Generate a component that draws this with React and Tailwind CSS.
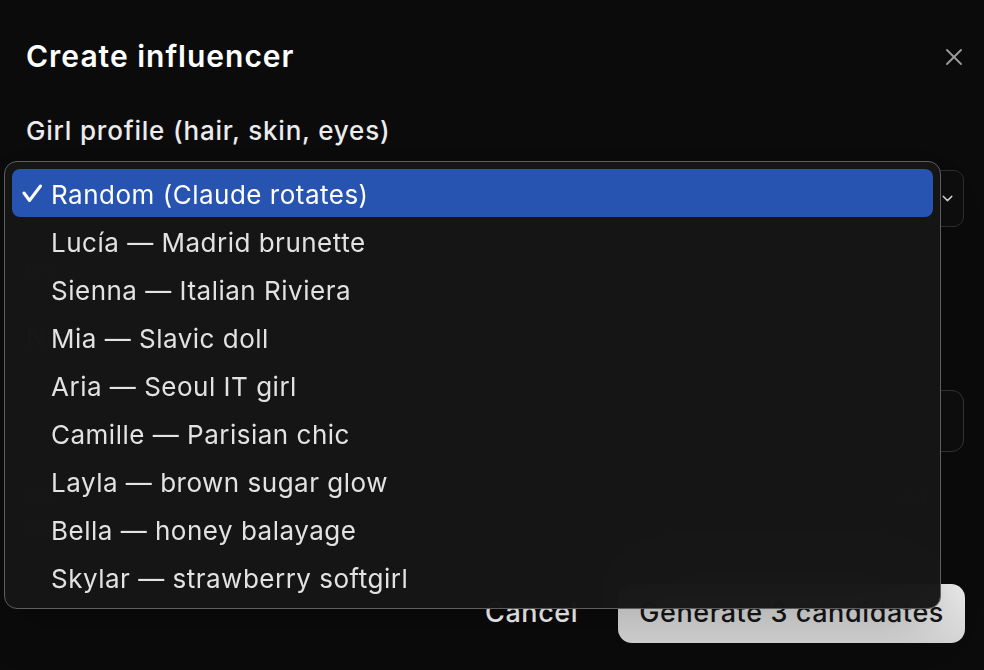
import React from "react";
import { X, ChevronDown } from "lucide-react";

const profiles = [
    "Random (Claude rotates)",
    "Lucía — Madrid brunette",
    "Sienna — Italian Riviera",
    "Mia — Slavic doll",
    "Aria — Seoul IT girl",
    "Camille — Parisian chic",
    "Layla — brown sugar glow",
    "Bella — honey balayage",
    "Skylar — strawberry softgirl",
];

const Check = () => (
    <svg width="20" height="19" viewBox="0 0 20 19" fill="none" className="shrink-0">
        <path d="M2 9 L7.5 16.5 L18.5 2" stroke="white" strokeWidth="3" strokeLinecap="round" strokeLinejoin="round"/>
    </svg>
);

// native-looking popup list that opens over the select
const ProfileMenu = ({selected = 0}) => (
    <div className="absolute left-[4px] top-[161px] w-[937px] rounded-[13px] border border-[#5e5e5e] bg-[#161616]/[0.97] backdrop-blur-2xl shadow-2xl p-[7px] z-10">
        {profiles.map((name, i) => (
            <div key={name}
                 className={"h-[48px] flex items-center rounded-[8px] pl-[10px] pt-[3px] " + (i === selected ? "bg-[#2754b1] text-white" : "text-[#e2e2e2]")}>
                <div className="w-[29px] flex items-center -mt-[3px]">
                    {i === selected && <Check/>}
                </div>
                <span className="text-[26px] leading-none tracking-[0.5px]">{name}</span>
            </div>
        ))}
    </div>
);

export default function App() {
    return (
        <div className="relative w-[984px] h-[670px] overflow-hidden bg-[#0b0b0b] text-white"
             style={{fontFamily: "Inter, 'Noto Sans', sans-serif"}}>
            <div className="flex flex-col pl-[26px] pr-[20px] pt-[36px]">
                <div className="flex items-center justify-between h-[40px]">
                    <h2 className="text-[30px] font-semibold leading-[40px] tracking-[1px]">Create influencer</h2>
                    <X className="text-[#9a9a9a] -mr-[4px] mt-[2px]" size={28} strokeWidth={1.6}/>
                </div>

                <label className="mt-[38px] text-[26px] leading-[34px] font-medium text-[#ececec] tracking-[0.8px]">
                    Girl profile (hair, skin, eyes)
                </label>
                <div className="mt-[22px] h-[57px] rounded-[10px] border border-[#2e2e2e] bg-[#0e0e0e] flex items-center justify-between pl-[18px] pr-[7px]">
                    <span className="text-[24px] text-[#e5e5e5]">Random (Claude rotates)</span>
                    <ChevronDown className="text-[#d0d0d0]" size={17} strokeWidth={2}/>
                </div>
                <p className="mt-[31px] text-[18px] leading-[24px] text-[#8a8a8a]">
                    Each candidate gets a different look when Random is selected.
                </p>

                <label className="mt-[38px] text-[26px] leading-[34px] font-medium text-[#ececec] tracking-[0.8px]">
                    Niche
                </label>
                <div className="mt-[36px] h-[62px] rounded-[12px] border border-[#333] bg-[#0e0e0e] flex items-center px-[18px]">
                    <span className="text-[22px] text-[#6b6b6b]">fitness, travel, fashion…</span>
                </div>
                <p className="mt-[30px] text-[18px] leading-[30px] text-[#8a8a8a] pr-[16px]">
                    Claude writes a name, bio and posting style for each candidate so you can pick your favourite quickly
                    and start generating content right away.
                </p>

                <div className="mt-[42px] flex justify-end items-center gap-[20px] -mr-[1px]">
                    <button className="h-[59px] px-[20px] text-[27px] font-medium text-white tracking-[0.6px]">Cancel</button>
                    <button className="h-[59px] px-[21px] rounded-[14px] bg-gradient-to-b from-[#ececec] to-[#d5d5d5] text-[27px] font-medium text-[#161616] tracking-[0.6px]">
                        Generate 3 candidates
                    </button>
                </div>
            </div>

            <ProfileMenu selected={0}/>
        </div>
    );
}
